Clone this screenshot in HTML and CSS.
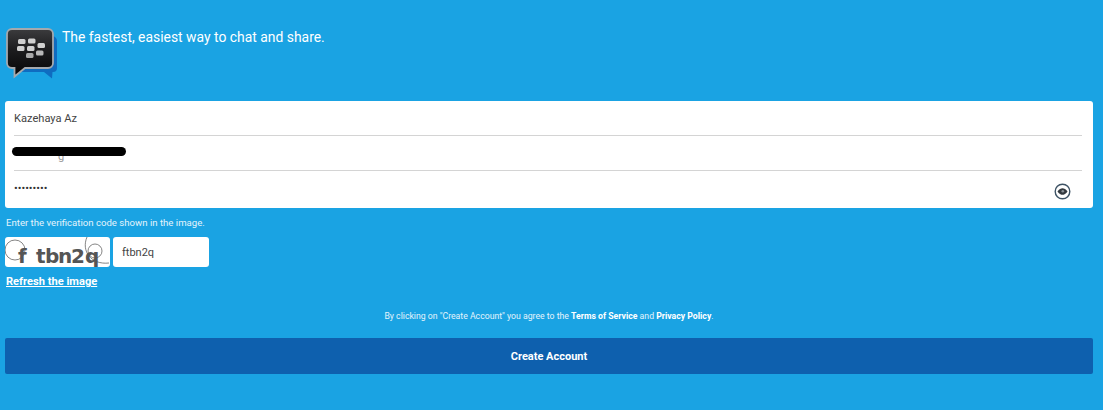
FILE: index.html
```html
<!DOCTYPE html>
<html lang="en">
<head>
<meta charset="utf-8">
<title>Create Account</title>
<link rel="stylesheet" href="styles.css">
</head>
<body>
<main class="page">
  <header class="intro">
    <svg class="logo" width="52" height="54" viewBox="0 0 52 54" aria-hidden="true">
      <defs>
        <linearGradient id="bubble" x1="0" y1="0" x2="0" y2="1">
          <stop offset="0" stop-color="#3c3c3e"/>
          <stop offset="0.45" stop-color="#1c1c1e"/>
          <stop offset="1" stop-color="#050505"/>
        </linearGradient>
      </defs>
      <path d="M10 8H46a5 5 0 0 1 5 5V40a4 4 0 0 1-4 4H46.500L46 50.500 38 44H10Z" fill="#0f6cc0"/>
      <path d="M6 1H42a5 5 0 0 1 5 5V35a5 5 0 0 1-5 5H19L8.500 48.500V40H6a5 5 0 0 1-5-5V6a5 5 0 0 1 5-5Z" fill="url(#bubble)" stroke="#a4a9ae" stroke-width="1.800"/>
      <g fill="#d0d0d0">
        <rect x="12" y="11" width="7.500" height="5" rx="1.500"/>
        <rect x="22" y="10.500" width="7.500" height="5" rx="1.500"/>
        <rect x="11" y="18" width="7.500" height="5" rx="1.500"/>
        <rect x="21" y="18" width="7.500" height="5" rx="1.500"/>
        <rect x="31.500" y="15" width="7.500" height="5" rx="1.500"/>
        <rect x="20" y="25" width="7.500" height="5" rx="1.500" fill="#a8a8a8"/>
        <rect x="30" y="22.500" width="7.500" height="5" rx="1.500" fill="#b8b8b8"/>
      </g>
    </svg>
    <p class="tagline">The fastest, easiest way to chat and share.</p>
  </header>

  <section class="card">
    <div class="field"><span class="value">Kazehaya Az</span></div>
    <div class="field field-email">
      <span class="value muted">g</span>
      <span class="redaction"></span>
    </div>
    <div class="field field-last">
      <span class="value dots">•••••••••</span>
      <svg class="eye" width="17" height="17" viewBox="0 0 17 17" aria-hidden="true">
        <circle cx="8.500" cy="8.500" r="7.300" fill="#fff" stroke="#3d5264" stroke-width="1.400"/>
        <path d="M3.500 8.500C5 6 7 5.200 8.500 5.200S12 6 13.500 8.500C12 11 10 11.800 8.500 11.800S5 11 3.500 8.500Z" fill="#33393f"/>
        <circle cx="8.800" cy="8.300" r="1.300" fill="#8a9096"/>
      </svg>
    </div>
  </section>

  <p class="hint">Enter the verification code shown in the image.</p>
  <div class="verify">
    <svg class="captcha" width="105" height="30" viewBox="0 0 105 30" role="img" aria-label="captcha">
      <g fill="none" stroke="#666" stroke-width="0.800">
        <circle cx="10" cy="13" r="10"/>
        <circle cx="90" cy="14" r="7"/>
        <path d="M82 0C76 14 86 28 104 26"/>
      </g>
      <text class="captcha-text" x="13 31 40 53 66 80" y="26">ftbn2q</text>
    </svg>
    <div class="code">ftbn2q</div>
  </div>
  <a class="refresh" href="#">Refresh the image</a>

  <p class="terms">By clicking on "Create Account" you agree to the <b>Terms of Service</b> and <b>Privacy Policy</b>.</p>
  <button class="submit" type="button">Create Account</button>
</main>
</body>
</html>
```
FILE: styles.css
```css
* { box-sizing: border-box; }
html, body { margin: 0; height: 100%; }
body {
  background: #1aa3e3;
  font-family: Roboto, "Liberation Sans", sans-serif;
  color: #fff;
  overflow: hidden;
}
.page { padding: 28px 10px 0 5px; }
.intro { display: flex; align-items: flex-start; height: 73px; padding-left: 1px; }
.logo { flex: none; }
.tagline { margin: 0 0 0 4px; font-size: 13.900px; line-height: 18px; }
.card {
  background: #fff;
  border-radius: 3px;
  padding: 0 11px 0 9px;
  height: 107px;
}
.field {
  position: relative;
  height: 35px;
  border-bottom: 1px solid #d4d4d4;
  display: flex;
  align-items: center;
  font-size: 11.100px;
  color: #444;
}
.field:first-child .value { margin-top: 1px; }
.field-last { border-bottom: 0; height: 37px; }
.value { display: block; }
.muted { color: #999; }
.field-email .muted { margin: 6px 0 0 44px; }
.redaction {
  position: absolute;
  left: -2px;
  top: 11px;
  width: 114px;
  height: 9px;
  background: #000;
  border-radius: 4.500px;
}
.dots { font-size: 11px; letter-spacing: 0; color: #333; margin-top: -3px; }
.eye { position: absolute; right: 11px; top: 12px; }
.hint { margin: 9px 0 0 1px; font-size: 9.600px; line-height: 11px; color: #e4f4fc; }
.verify { display: flex; gap: 3px; margin-top: 9px; }
.captcha { background: #fff; border-radius: 3px; flex: none; }
.captcha-text { font: bold 20px "DejaVu Sans", sans-serif; fill: #555; }
.code {
  width: 96px;
  height: 30px;
  background: #fff;
  border-radius: 3px;
  color: #444;
  font-size: 11px;
  line-height: 31px;
  padding-left: 9px;
}
.refresh {
  display: inline-block;
  margin: 8px 0 0 1px;
  font-size: 11.100px;
  line-height: 14px;
  font-weight: 700;
  color: #fff;
}
.terms { margin: 21px 0 0; text-align: center; font-size: 8.700px; line-height: 12px; color: #e4f4fc; }
.terms b { color: #fff; }
.submit {
  display: block;
  width: 100%;
  height: 36px;
  margin-top: 16px;
  border: 0;
  border-radius: 2px;
  background: #0e60ae;
  color: #fff;
  font: 700 11px Roboto, "Liberation Sans", sans-serif;
}
```
